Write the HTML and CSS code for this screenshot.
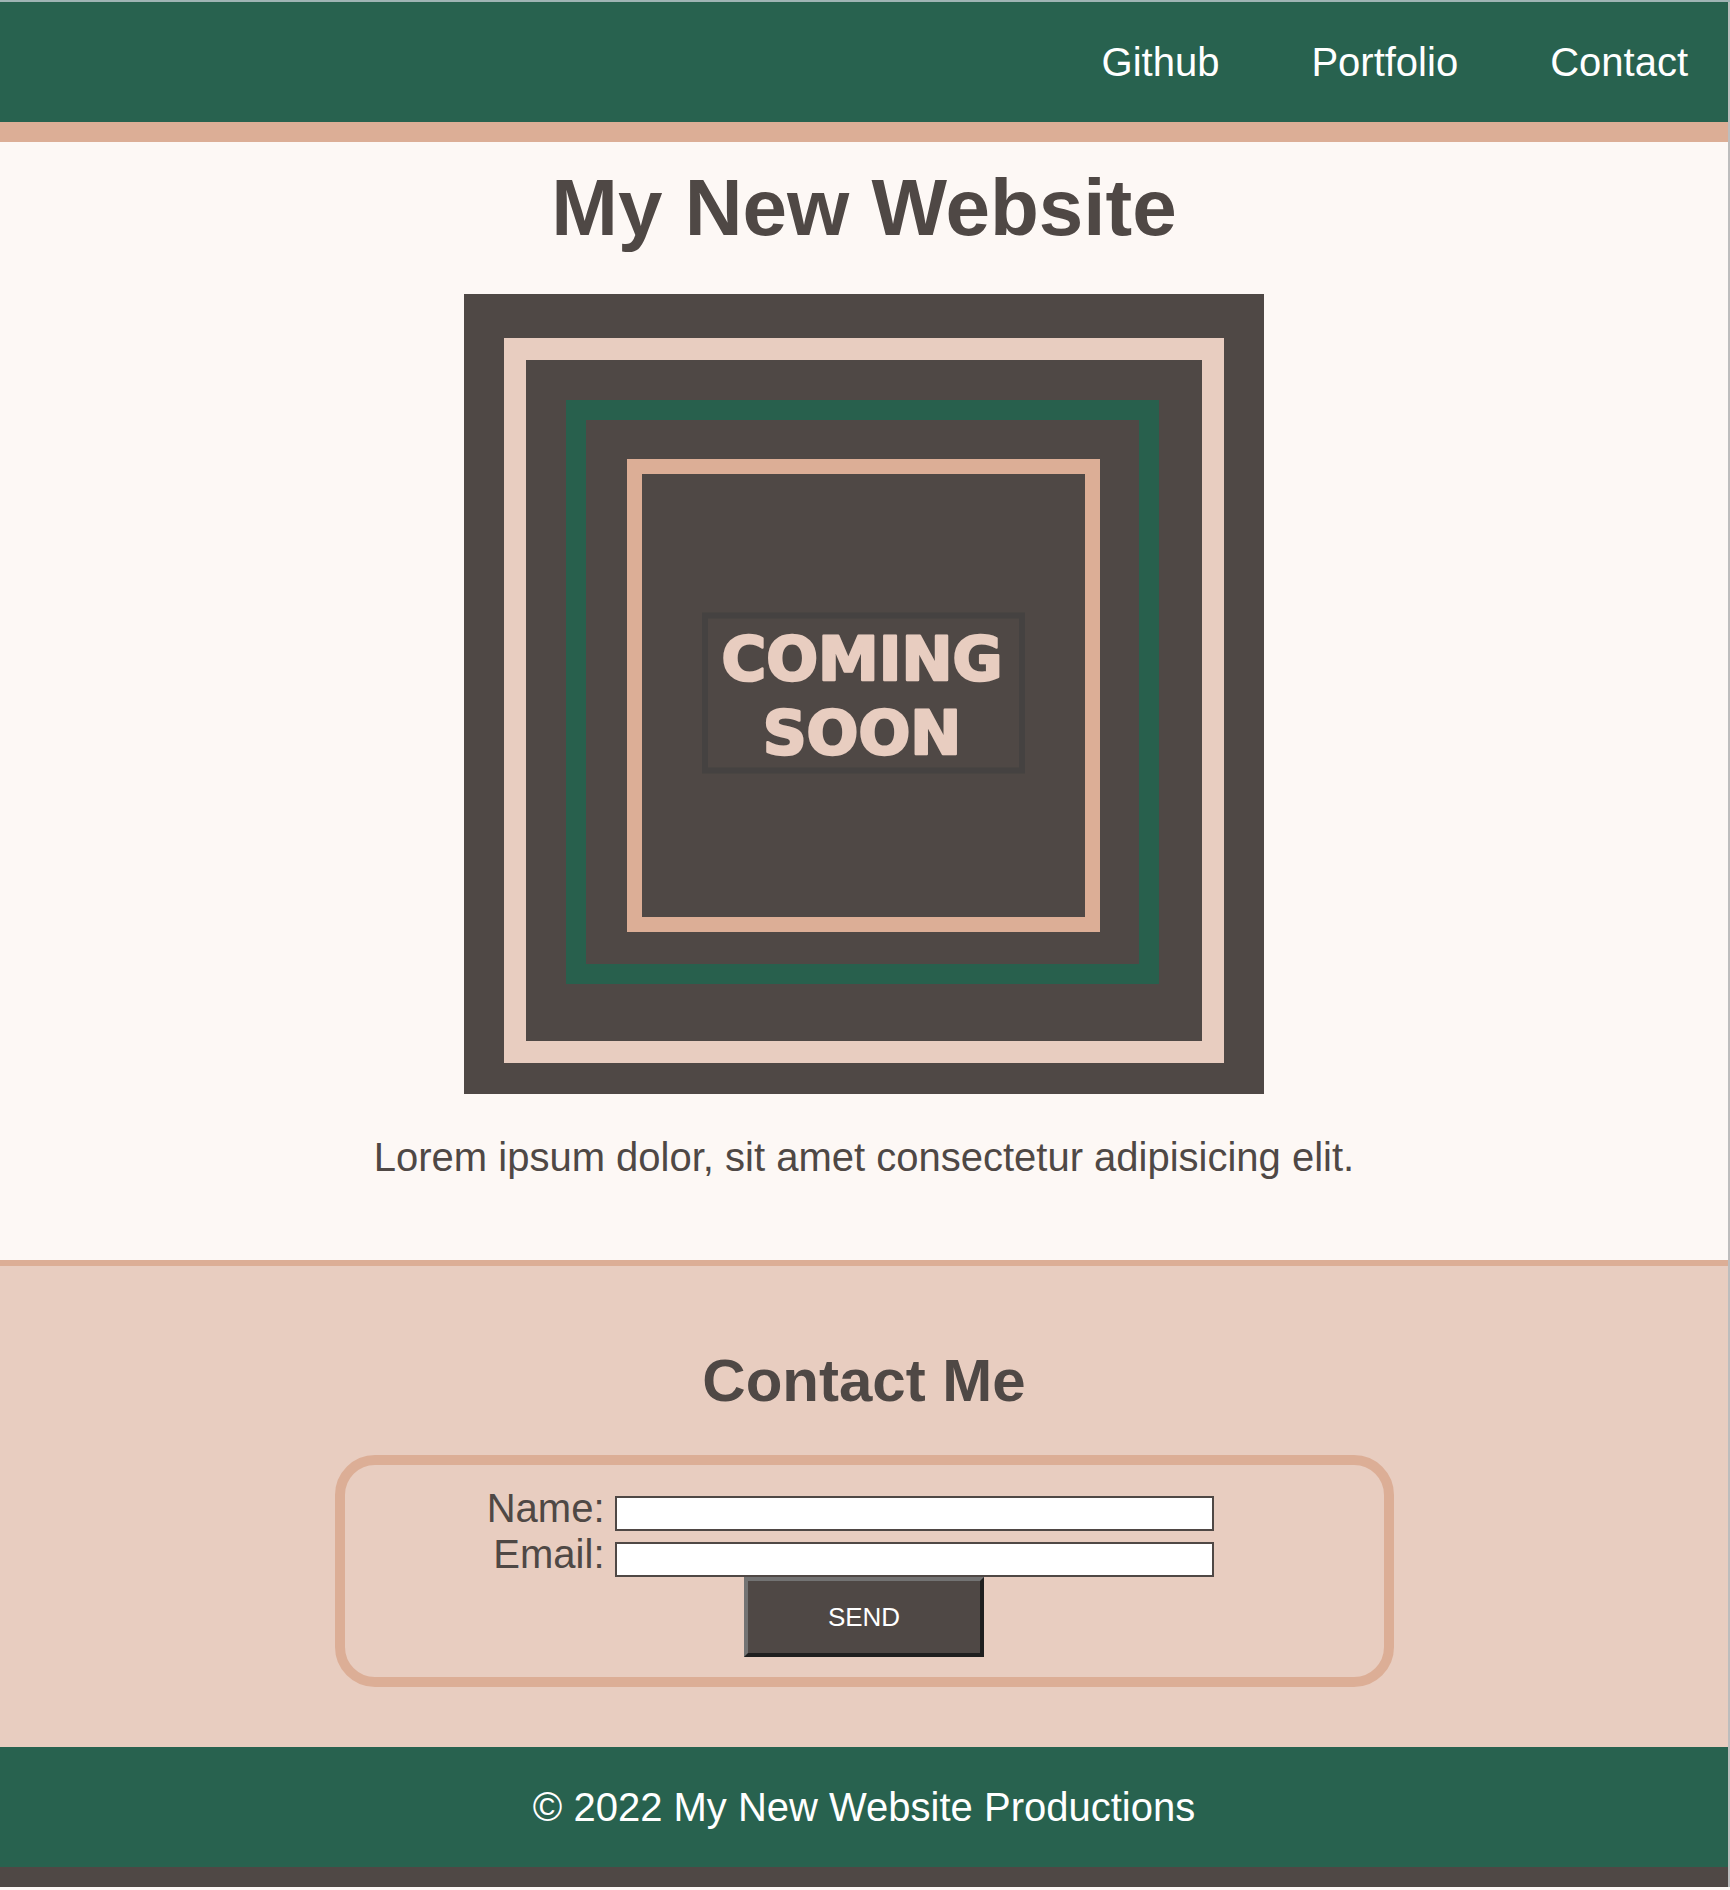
FILE: index.html
```html
<!DOCTYPE html>
<html lang="en">
<head>
<meta charset="utf-8">
<title>My New Website</title>
<link rel="stylesheet" href="styles.css">
</head>
<body>
<div class="page">
  <header class="site-header">
    <nav class="nav">
      <a class="nav-link" href="#">Github</a>
      <a class="nav-link" href="#">Portfolio</a>
      <a class="nav-link" href="#">Contact</a>
    </nav>
  </header>

  <main class="intro">
    <h1 class="title">My New Website</h1>
    <svg class="coming-soon" width="800" height="800" viewBox="0 0 800 800" role="img" aria-label="Coming soon">
      <rect x="0" y="0" width="800" height="800" fill="#4f4845"/>
      <rect x="51" y="55" width="698" height="703" fill="none" stroke="#e8cdc0" stroke-width="22"/>
      <rect x="112" y="116" width="573" height="564" fill="none" stroke="#28604d" stroke-width="20"/>
      <rect x="170.5" y="172.5" width="458" height="458" fill="none" stroke="#dcae96" stroke-width="15"/>
      <rect x="241" y="321.5" width="317" height="155" fill="none" stroke="#454241" stroke-width="6"/>
      <text class="cs-text" x="398" y="385.5" text-anchor="middle">COMING</text>
      <text class="cs-text" x="398" y="460" text-anchor="middle">SOON</text>
    </svg>
    <p class="lead">Lorem ipsum dolor, sit amet consectetur adipisicing elit.</p>
  </main>

  <section class="contact">
    <h2 class="contact-title">Contact Me</h2>
    <form class="contact-form">
      <div class="fields">
        <label class="field-label" for="name">Name:</label>
        <input class="field-input" id="name" type="text">
        <label class="field-label" for="email">Email:</label>
        <input class="field-input" id="email" type="email">
      </div>
      <button class="send" type="button">SEND</button>
    </form>
  </section>

  <footer class="site-footer">
    <p class="footer-text">© 2022 My New Website Productions</p>
  </footer>
</div>
</body>
</html>
```
FILE: styles.css
```css
* { box-sizing: border-box; }

html, body {
  margin: 0;
  padding: 0;
}

body {
  background: #fdf8f5;
  font-family: "Liberation Sans", Arial, sans-serif;
  color: #4f4845;
  border-top: 2px solid #9fb4b4;
}

.page {
  margin-right: 2px;
  box-shadow: 2px 0 0 #bdbdbd;
}

.site-header {
  background: #28624f;
  height: 140px;
  border-bottom: 20px solid #dcae96;
  display: flex;
  align-items: center;
  justify-content: flex-end;
  padding-right: 40px;
}

.nav {
  display: flex;
  gap: 92px;
}

.nav-link {
  color: #ffffff;
  text-decoration: none;
  font-size: 40px;
  line-height: 46px;
}

.intro {
  display: flex;
  flex-direction: column;
  align-items: center;
  padding: 20px 0 80px;
  border-bottom: 6px solid #dcae96;
  background: #fdf8f5;
}

.title {
  margin: 0;
  font-size: 80px;
  line-height: 92px;
  font-weight: 700;
}

.coming-soon {
  display: block;
  margin-top: 40px;
}

.cs-text {
  font-family: "DejaVu Sans", sans-serif;
  font-weight: 700;
  font-size: 61px;
  fill: #e8cdc0;
  stroke: #e8cdc0;
  stroke-width: 2.5px;
  stroke-linejoin: round;
}

.lead {
  margin: 40px 0 0;
  font-size: 40px;
  line-height: 46px;
}

.contact {
  background: #e8cdc0;
  padding: 80px 0 60px;
  display: flex;
  flex-direction: column;
  align-items: center;
}

.contact-title {
  margin: 0 0 40px;
  font-size: 60px;
  line-height: 69px;
  font-weight: 700;
}

.contact-form {
  width: 1059px;
  border: 10px solid #dcae96;
  border-radius: 40px;
  padding: 20px 0;
  display: flex;
  flex-direction: column;
  align-items: center;
}

.fields {
  align-self: stretch;
  display: grid;
  grid-template-columns: 260px 599px;
  grid-auto-rows: 46px;
  column-gap: 10px;
}

.field-label {
  text-align: right;
  font-size: 40px;
  line-height: 46px;
}

.field-input {
  align-self: end;
  height: 35px;
  margin: 0;
  border: 2px solid #4f4845;
  background: #ffffff;
  font-size: 20px;
  padding: 0 4px;
}

.send {
  width: 240px;
  height: 80px;
  margin: 0;
  background: #4f4845;
  color: #ffffff;
  font-family: "Liberation Sans", Arial, sans-serif;
  font-size: 26px;
  border-style: solid;
  border-width: 4px;
  border-color: #737373 #1f1f1f #1f1f1f #737373;
  padding: 0;
}

.site-footer {
  background: #28624f;
  height: 140px;
  border-bottom: 20px solid #4f4845;
  display: flex;
  align-items: center;
  justify-content: center;
}

.footer-text {
  margin: 0;
  color: #ffffff;
  font-size: 40px;
  line-height: 46px;
}
```
